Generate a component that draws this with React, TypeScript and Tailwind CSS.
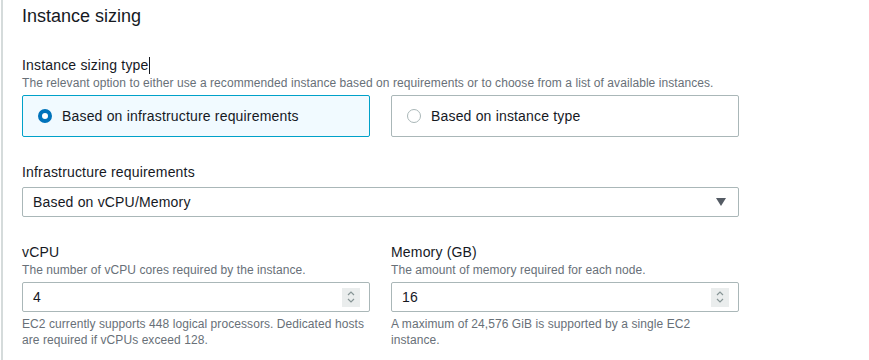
const font = { fontFamily: '"Liberation Sans", Arial, sans-serif' };

function Radio({ checked }: { checked: boolean }) {
  return checked ? (
    <span className="w-[14px] h-[14px] rounded-full border-[4px] border-[#0073bb] bg-white shrink-0" />
  ) : (
    <span className="w-[14px] h-[14px] rounded-full border-[1.5px] border-[#aab7b8] bg-white shrink-0" />
  );
}

function Stepper() {
  return (
    <span className="w-[18px] h-[19px] bg-[#eaeded] flex flex-col items-center justify-center gap-[2px]">
      <svg width="8" height="5" viewBox="0 0 8 5">
        <path d="M1 4 L4 1 L7 4" fill="none" stroke="#879596" strokeWidth="1.2" />
      </svg>
      <svg width="8" height="5" viewBox="0 0 8 5">
        <path d="M1 1 L4 4 L7 1" fill="none" stroke="#879596" strokeWidth="1.2" />
      </svg>
    </span>
  );
}

function NumberField({
  label,
  desc,
  value,
  help,
}: {
  label: string;
  desc: string;
  value: string;
  help: string;
}) {
  return (
    <div className="flex flex-col">
      <div className="text-[14px] leading-[20px] text-[#16191f]">{label}</div>
      <div className="text-[12px] leading-[16px] text-[#687078] tracking-[0.006em]">{desc}</div>
      <div className="mt-[4px] h-[30px] border border-[#aab7b8] rounded-[2px] flex items-center justify-between pl-[10px] pr-[9px]">
        <span className="text-[14px] text-[#16191f]">{value}</span>
        <Stepper />
      </div>
      <div className="mt-[5px] text-[12px] leading-[15.5px] text-[#687078] tracking-[0.006em]">{help}</div>
    </div>
  );
}

export default function App() {
  return (
    <div className="w-[869px] h-[360px] bg-white overflow-hidden pl-px tracking-[0.011em]" style={font}>
      <div className="h-full border-l-2 border-[#d5dbdb] pl-[19px] pt-1">
        <div className="w-[717px]">
          <h2 className="text-[18px] leading-[24px] text-[#16191f] tracking-normal">Instance sizing</h2>

          <div className="mt-[27px] text-[14px] leading-[20px] text-[#16191f] flex items-center">
            Instance sizing type
            <span className="inline-block w-px h-[17px] bg-[#16191f] ml-px" />
          </div>
          <div className="text-[12px] leading-[16px] text-[#687078] tracking-[0.006em]">
            The relevant option to either use a recommended instance based on requirements or to choose from a list of available instances.
          </div>

          <div className="mt-[4px] grid grid-cols-2 gap-[21px]">
            <div className="h-[42px] border border-[#00a1c9] bg-[#f1faff] rounded-[2px] flex items-center pl-[15px] gap-[10px]">
              <Radio checked />
              <span className="text-[14px] text-[#16191f]">Based on infrastructure requirements</span>
            </div>
            <div className="h-[42px] border border-[#aab7b8] bg-white rounded-[2px] flex items-center pl-[15px] gap-[10px]">
              <Radio checked={false} />
              <span className="text-[14px] text-[#16191f]">Based on instance type</span>
            </div>
          </div>

          <div className="mt-[25px] text-[14px] leading-[20px] text-[#16191f]">Infrastructure requirements</div>
          <div className="mt-[5px] h-[30px] border border-[#aab7b8] rounded-[2px] flex items-center justify-between pl-[10px] pr-[12px]">
            <span className="text-[14px] text-[#16191f]">Based on vCPU/Memory</span>
            <svg width="10" height="8" viewBox="0 0 10 8">
              <path d="M0 0 H10 L5 8 Z" fill="#545b64" />
            </svg>
          </div>

          <div className="mt-[25px] grid grid-cols-2 gap-[21px]">
            <NumberField
              label="vCPU"
              desc="The number of vCPU cores required by the instance."
              value="4"
              help="EC2 currently supports 448 logical processors. Dedicated hosts are required if vCPUs exceed 128."
            />
            <NumberField
              label="Memory (GB)"
              desc="The amount of memory required for each node."
              value="16"
              help="A maximum of 24,576 GiB is supported by a single EC2 instance."
            />
          </div>
        </div>
      </div>
    </div>
  );
}
